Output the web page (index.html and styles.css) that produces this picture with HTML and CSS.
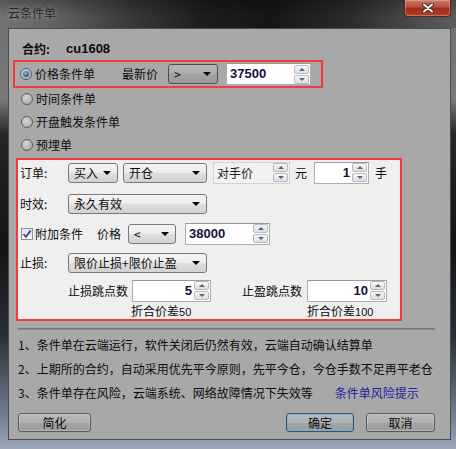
FILE: index.html
```html
<!DOCTYPE html>
<html>
<head>
<meta charset="utf-8">
<link rel="stylesheet" href="styles.css">
</head>
<body>
<div class="window">
  <div class="titlebar">
    <span class="title">云条件单</span>
    <div class="close">
      <svg width="14" height="10" viewBox="0 0 14 10"><path d="M3 1.5 L11 8.5 M11 1.5 L3 8.5" stroke="#3a2a2a" stroke-width="4" stroke-linecap="round"/><path d="M3 1.5 L11 8.5 M11 1.5 L3 8.5" stroke="#f4f4f4" stroke-width="2" stroke-linecap="round"/></svg>
    </div>
  </div>
  <div class="client">
    <div class="contract"><span class="clabel">合约:</span><span class="code">cu1608</span></div>

    <div class="box1">
      <span class="radio on"></span><span class="rtext">价格条件单</span>
      <span class="newest">最新价</span>
      <div class="combo dim c-op"><span>&gt;</span><i class="arrow"></i></div>
      <div class="spin s-p1"><span class="val">37500</span><div class="btns"><b class="up"></b><b class="dn"></b></div></div>
    </div>

    <div class="radio-row"><span class="radio"></span><span class="rtext">时间条件单</span></div>
    <div class="radio-row"><span class="radio"></span><span class="rtext">开盘触发条件单</span></div>
    <div class="radio-row"><span class="radio"></span><span class="rtext">预埋单</span></div>

    <div class="box2">
      <div class="row r1">
        <span class="label">订单:</span>
        <div class="combo c-buy"><span>买入</span><i class="arrow"></i></div>
        <div class="combo c-open"><span>开仓</span><i class="arrow"></i></div>
        <div class="spin disabled s-cp"><span class="val txt">对手价</span><div class="btns"><b class="up"></b><b class="dn"></b></div></div>
        <span class="unit u-yuan">元</span>
        <div class="spin right s-qty"><span class="val">1</span><div class="btns"><b class="up"></b><b class="dn"></b></div></div>
        <span class="unit u-shou">手</span>
      </div>
      <div class="row r2">
        <span class="label">时效:</span>
        <div class="combo c-wide"><span>永久有效</span><i class="arrow"></i></div>
      </div>
      <div class="row r3">
        <span class="check"><svg width="10" height="10" viewBox="0 0 10 10"><path d="M1.5 5 L4 7.8 L8.6 1.6" fill="none" stroke="#2c4f9c" stroke-width="1.8"/></svg></span>
        <span class="ctext">附加条件</span>
        <span class="plabel">价格</span>
        <div class="combo c-lt"><span>&lt;</span><i class="arrow"></i></div>
        <div class="spin s-p2"><span class="val">38000</span><div class="btns"><b class="up"></b><b class="dn"></b></div></div>
      </div>
      <div class="row r4">
        <span class="label">止损:</span>
        <div class="combo c-wide"><span>限价止损+限价止盈</span><i class="arrow"></i></div>
      </div>
      <div class="row r5">
        <span class="plab l-sl">止损跳点数</span>
        <div class="spin right s-sl"><span class="val">5</span><div class="btns"><b class="up"></b><b class="dn"></b></div></div>
        <span class="plab l-tp">止盈跳点数</span>
        <div class="spin right s-tp"><span class="val">10</span><div class="btns"><b class="up"></b><b class="dn"></b></div></div>
      </div>
      <div class="row r6">
        <span class="diff d1">折合价差<span class="num">50</span></span>
        <span class="diff">折合价差<span class="num">100</span></span>
      </div>
    </div>

    <div class="sep"></div>
    <p class="note">1、条件单在云端运行，软件关闭后仍然有效，云端自动确认结算单</p>
    <p class="note">2、上期所的合约，自动采用优先平今原则，先平今仓，今仓手数不足再平老仓</p>
    <p class="note n3"><span>3、条件单存在风险，云端系统、网络故障情况下失效等</span><span class="link">条件单风险提示</span></p>

    <div class="buttons">
      <div class="btn b-simple">简化</div>
      <div class="btn default b-ok">确定</div>
      <div class="btn b-cancel">取消</div>
    </div>
  </div>
</div>
</body>
</html>
```

FILE: styles.css
```css
html, body {
  margin: 0;
  padding: 0;
}
body {
  font-family: "Noto Sans CJK SC", "Liberation Sans", sans-serif;
  font-size: 12px;
  color: #0c0c0c;
  background: #1c1c1c;
}
.window {
  width: 456px;
  height: 449px;
  display: flex;
  flex-direction: column;
  background: linear-gradient(to bottom, #6c6c6c 0, #7a7a7a 22%, #262626 30%, #141414 55%, #2a3038 75%, #6e7c8c 92%, #9aa8b8 100%);
  overflow: hidden;
}
.titlebar {
  flex: none;
  height: 28px;
  display: flex;
  align-items: flex-start;
  background:
    linear-gradient(to bottom, rgba(0,0,0,0.25), rgba(0,0,0,0) 60%),
    linear-gradient(to right, #737373 0, #626262 12%, #3a3a3a 28%, #1c1c1c 45%, #161616 60%, #2e2e2e 78%, #4e4e4e 92%, #5c5c5c 100%);
}
.title {
  margin: 5px 0 0 8px;
  line-height: 16px;
  font-size: 12px;
  color: #262626;
  text-shadow: 0 0 5px rgba(220,220,220,0.55);
}
.close {
  margin-left: auto;
  margin-right: 5px;
  width: 47px;
  height: 17px;
  box-sizing: border-box;
  border: 1px solid #4a2a24;
  border-top: none;
  border-radius: 0 0 4px 4px;
  background: linear-gradient(to bottom, #c97a6a 0, #b84a36 45%, #9c2a14 55%, #b5402a 100%);
  box-shadow: inset 0 0 0 1px rgba(255,200,190,0.35);
  display: flex;
  align-items: center;
  justify-content: center;
}
.client {
  flex: none;
  margin: 0 5px 0 8px;
  height: 412px;
  box-sizing: border-box;
  border: 1px solid #4c4c4c;
  background: #a8a8a8;
  display: flex;
  flex-direction: column;
  align-items: flex-start;
}
.contract {
  margin: 9px 0 0 13px;
  height: 22px;
  display: flex;
  align-items: center;
  line-height: 16px;
}
.clabel {
  width: 44px;
  font-weight: bold;
}
.code {
  font-family: "Liberation Sans", sans-serif;
  font-weight: bold;
  font-size: 13px;
}
.box1 {
  margin-left: 4px;
  width: 310px;
  height: 28px;
  box-sizing: border-box;
  border: 2px solid #f43a3a;
  display: flex;
  align-items: center;
  padding-left: 5px;
  line-height: 16px;
}
.radio {
  flex: none;
  width: 12px;
  height: 12px;
  box-sizing: border-box;
  border-radius: 50%;
  border: 1px solid #5c5c5c;
  background: radial-gradient(circle at 40% 35%, #d6d6d6 0, #b2b2b2 70%);
  display: flex;
  align-items: center;
  justify-content: center;
}
.radio.on::after {
  content: "";
  width: 6px;
  height: 6px;
  border-radius: 50%;
  background: radial-gradient(circle at 40% 35%, #7fc0e8 0, #2c6fa4 55%, #163e66 100%);
}
.rtext {
  margin-left: 3px;
}
.newest {
  margin-left: 27px;
}
.radio-row {
  height: 23px;
  display: flex;
  align-items: center;
  margin-left: 12px;
  line-height: 16px;
}
.box1 + .radio-row {
  margin-top: -1px;
}
.combo {
  flex: none;
  height: 20px;
  box-sizing: border-box;
  border: 1px solid #7a7a7a;
  border-radius: 3px;
  background: linear-gradient(to bottom, #f4f4f4 0, #ececec 50%, #dedede 52%, #d2d2d2 100%);
  display: flex;
  align-items: center;
  padding: 0 6px 0 5px;
  line-height: 16px;
}
.combo span {
  flex: 1;
}
.combo .arrow {
  width: 0;
  height: 0;
  border-left: 4px solid transparent;
  border-right: 4px solid transparent;
  border-top: 4px solid #000;
}
.combo.dim {
  border-color: #505050;
  background: linear-gradient(to bottom, #b6b6b6 0, #ababab 50%, #a2a2a2 52%, #9a9a9a 100%);
}
.c-op {
  margin-left: 10px;
  width: 50px;
}
.spin {
  flex: none;
  height: 22px;
  box-sizing: border-box;
  border: 1px solid #abadb3;
  border-top-color: #999;
  background: #fff;
  display: flex;
  align-items: center;
  padding-right: 1px;
}
.spin .val {
  flex: 1;
  font-family: "Liberation Sans", sans-serif;
  font-weight: bold;
  font-size: 13px;
  color: #12123c;
  padding-left: 3px;
  line-height: 16px;
}
.spin.right .val {
  text-align: right;
  padding: 0 2px 0 0;
}
.spin.disabled {
  background: #f2f2f2;
  border-color: #d2d2d2;
}
.spin .val.txt {
  font-family: "Noto Sans CJK SC", sans-serif;
  font-weight: normal;
  font-size: 12px;
  color: #222;
}
.btns {
  flex: none;
  width: 15px;
  display: flex;
  flex-direction: column;
  gap: 1px;
}
.btns b {
  height: 9px;
  box-sizing: border-box;
  border: 1px solid #b9b9b9;
  border-radius: 2px;
  background: linear-gradient(to bottom, #f7f7f7, #dedede);
  display: flex;
  align-items: center;
  justify-content: center;
}
.btns b.up::after {
  content: "";
  border-left: 3px solid transparent;
  border-right: 3px solid transparent;
  border-bottom: 3px solid #4a6494;
}
.btns b.dn::after {
  content: "";
  border-left: 3px solid transparent;
  border-right: 3px solid transparent;
  border-top: 3px solid #4a6494;
}
.s-p1 {
  margin-left: 8px;
  width: 85px;
}
.box2 {
  margin: 2px 0 0 7px;
  width: 386px;
  height: 163px;
  box-sizing: border-box;
  border: 2px solid #f43a3a;
  background: #efefef;
  display: flex;
  flex-direction: column;
}
.row {
  display: flex;
  align-items: center;
  height: 21px;
  line-height: 16px;
}
.r1 { margin-top: 2px; }
.r2 { margin-top: 10px; }
.r3 { margin-top: 9px; }
.r4 { margin-top: 8px; }
.r5 { margin-top: 7px; }
.r6 { margin-top: 2px; height: 16px; }
.label {
  width: 48px;
  margin-left: 2px;
  flex: none;
}
.c-buy { width: 50px; }
.c-open { width: 84px; margin-left: 5px; }
.s-cp { width: 77px; margin-left: 6px; }
.u-yuan { margin-left: 5px; }
.s-qty { width: 55px; margin-left: 7px; }
.u-shou { margin-left: 6px; }
.c-wide { width: 139px; }
.check {
  flex: none;
  margin-left: 3px;
  width: 12px;
  height: 12px;
  box-sizing: border-box;
  border: 1px solid #8e8f8f;
  background: linear-gradient(to bottom, #e4e4e4, #fafafa);
  display: flex;
  align-items: center;
  justify-content: center;
}
.ctext { margin-left: 2px; }
.plabel { margin-left: 14px; }
.c-lt { width: 48px; margin-left: 7px; }
.s-p2 { width: 85px; margin-left: 9px; }
.r3 .spin { height: 22px; }
.l-sl { margin-left: 50px; }
.s-sl { width: 79px; margin-left: 4px; }
.l-tp { margin-left: 31px; }
.s-tp { width: 80px; margin-left: 5px; }
.r6 {
  padding-left: 113px;
}
.diff {
  flex: none;
}
.d1 {
  width: 176px;
}
.num {
  font-family: "Liberation Sans", sans-serif;
  font-size: 11px;
}
.sep {
  margin: 7px 0 0 9px;
  width: 417px;
  height: 1px;
  border-top: 1px solid #737373;
  background: #8e8e8e;
}
.note {
  margin: 0 0 0 9px;
  line-height: 24px;
  height: 24px;
  white-space: nowrap;
}
.sep + .note {
  margin-top: 3px;
}
.n3 {
  display: flex;
}
.link {
  margin-left: 22px;
  color: #1c1ca0;
}
.buttons {
  margin: 8px 0 0 9px;
  display: flex;
}
.btn {
  flex: none;
  height: 19px;
  box-sizing: border-box;
  border: 1px solid #5a5a5a;
  border-radius: 3px;
  background: linear-gradient(to bottom, #b9b9b9 0, #b0b0b0 50%, #a3a3a3 52%, #9c9c9c 100%);
  box-shadow: inset 0 0 0 1px rgba(220,220,220,0.35);
  display: flex;
  align-items: center;
  justify-content: center;
  line-height: 16px;
}
.btn.default {
  border-color: #2a5878;
  background: linear-gradient(to bottom, #b4bcc2 0, #aab2b8 50%, #9ea6ac 52%, #98a0a6 100%);
  box-shadow: inset 0 0 0 1px rgba(120,170,200,0.6);
}
.b-simple { width: 73px; }
.b-ok { width: 68px; margin-left: 195px; }
.b-cancel { width: 69px; margin-left: 12px; }
```
